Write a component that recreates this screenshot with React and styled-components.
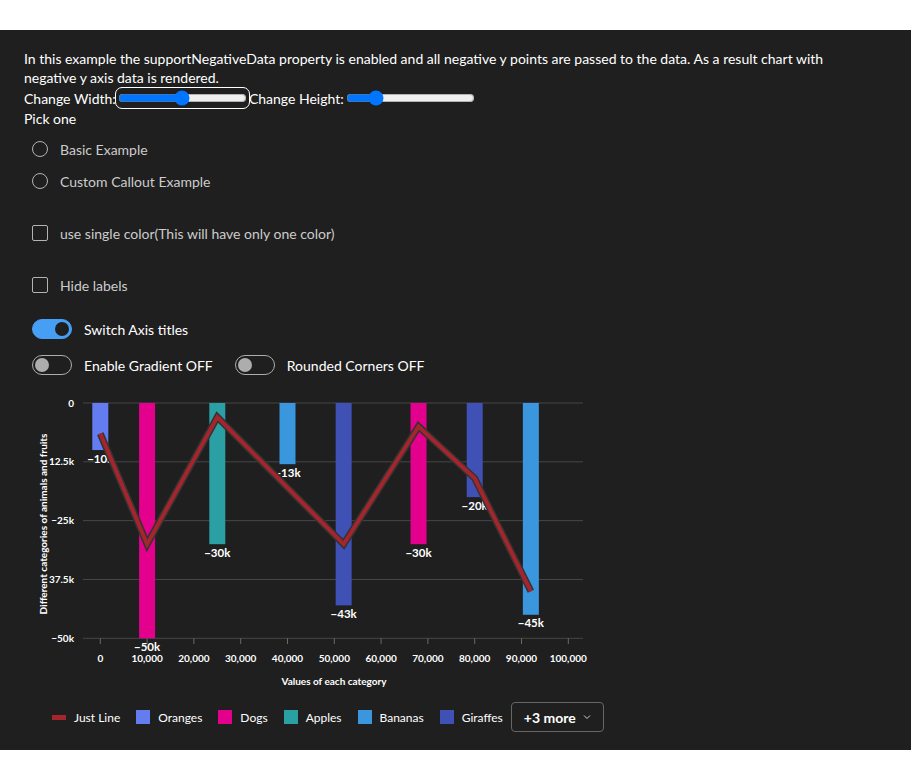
import React from 'react';
import styled, { createGlobalStyle } from 'styled-components';

const GlobalStyle = createGlobalStyle`
  body {
    margin: 0;
    background: #ffffff;
  }
`;

const Page = styled.div`
  margin-top: 30px;
  background: #1f1f1f;
  color: #ffffff;
  font-family: Lato, 'Noto Sans', sans-serif;
  font-size: 14px;
  padding: 19px 24px 18px;
`;

const Description = styled.div`
  line-height: 19px;
  max-width: 840px;
`;

const SliderRow = styled.div`
  display: flex;
  align-items: center;
  height: 22px;
`;

const Range = styled.input`
  margin: 0 2px;
  width: 129px;
  border-radius: 4px;
  outline: ${p => (p.$focused ? '1px solid #ffffff' : 'none')};
  outline-offset: 2px;
`;

const PickLabel = styled.div`
  line-height: 20px;
  margin-bottom: 4px;
`;

const OptionRow = styled.label`
  display: flex;
  align-items: center;
  gap: 12px;
  height: 32px;
  padding-left: 8px;
  color: #cccccc;
  margin-top: ${p => p.$gap || 0}px;
`;

const RadioCircle = styled.span`
  width: 16px;
  height: 16px;
  box-sizing: border-box;
  border: 1px solid #b3b3b3;
  border-radius: 50%;
`;

const CheckBox = styled.span`
  width: 16px;
  height: 16px;
  box-sizing: border-box;
  border: 1px solid #b3b3b3;
  border-radius: 2px;
`;

const ToggleRow = styled.div`
  display: flex;
  align-items: center;
  gap: 22px;
  margin-top: ${p => p.$gap}px;
  padding-left: 8px;
`;

const ToggleItem = styled.label`
  display: flex;
  align-items: center;
  gap: 12px;
  height: 20px;
`;

const Track = styled.span`
  width: 40px;
  height: 20px;
  box-sizing: border-box;
  border-radius: 10px;
  display: flex;
  align-items: center;
  padding: 0 2px;
  justify-content: ${p => (p.$on ? 'flex-end' : 'flex-start')};
  background: ${p => (p.$on ? '#479ef5' : 'transparent')};
  border: 1px solid ${p => (p.$on ? '#479ef5' : '#adadad')};
`;

const Knob = styled.span`
  width: 14px;
  height: 14px;
  border-radius: 50%;
  background: ${p => (p.$on ? '#1f1f1f' : '#adadad')};
`;

const ChartSvg = styled.svg`
  display: block;
  margin-top: 8px;
  font-family: Lato, 'Noto Sans', sans-serif;
`;

const Legend = styled.div`
  display: flex;
  align-items: center;
  margin-top: 7px;
  padding-left: 20px;
  height: 30px;
`;

const LegendItem = styled.div`
  display: flex;
  align-items: center;
  gap: 8px;
  padding: 0 8px;
  font-size: 12px;
  color: #ffffff;
`;

const Swatch = styled.span`
  width: 14px;
  height: ${p => (p.$line ? 5 : 14)}px;
  background: ${p => p.$color};
`;

const MoreButton = styled.button`
  display: flex;
  align-items: center;
  gap: 6px;
  height: 30px;
  margin-left: 0;
  padding: 0 11px 0 12px;
  background: transparent;
  border: 1px solid #666666;
  border-radius: 4px;
  color: #ffffff;
  font-family: Lato, 'Noto Sans', sans-serif;
  font-size: 14px;
  font-weight: 700;
`;

const bars = [
  { x: 0, y: -10000, c: '#637cef', label: '−10k' },
  { x: 10000, y: -50000, c: '#e3008c', label: '−50k' },
  { x: 25000, y: -30000, c: '#2aa0a4', label: '−30k' },
  { x: 40000, y: -13000, c: '#3a96dd', label: '−13k' },
  { x: 52000, y: -43000, c: '#3f51b5', label: '−43k' },
  { x: 68000, y: -30000, c: '#e3008c', label: '−30k' },
  { x: 80000, y: -20000, c: '#3f51b5', label: '−20k' },
  { x: 92000, y: -45000, c: '#3a96dd', label: '−45k' },
];

const linePoints = [
  [0, -6500], [10000, -30000], [25000, -3000], [52000, -30000],
  [68000, -5000], [80000, -16000], [92000, -40000],
];

const xPx = v => 76.3 + v * 0.00468;
const yPx = v => 20 + (-v / 50000) * 235.3;

const yTicks = [
  [0, '0'], [-12500, '−12.5k'], [-25000, '−25k'], [-37500, '−37.5k'], [-50000, '−50k'],
];
const xTicks = [0, 10000, 20000, 30000, 40000, 50000, 60000, 70000, 80000, 90000, 100000];

const legendItems = [
  { name: 'Just Line', color: '#a4262c', line: true },
  { name: 'Oranges', color: '#637cef' },
  { name: 'Dogs', color: '#e3008c' },
  { name: 'Apples', color: '#2aa0a4' },
  { name: 'Bananas', color: '#3a96dd' },
  { name: 'Giraffes', color: '#3f51b5' },
];

const Chart = () => {
  const pts = linePoints.map(([x, y]) => `${xPx(x)},${yPx(y)}`).join(' ');
  return (
    <ChartSvg width="590" height="312">
      {yTicks.map(([v]) => (
        <line key={v} x1="59" x2="559" y1={yPx(v)} y2={yPx(v)} stroke="#474747" strokeWidth="1" />
      ))}
      {xTicks.map(v => (
        <line key={v} x1={xPx(v)} x2={xPx(v)} y1="255.3" y2="261" stroke="#6a6a6a" strokeWidth="1" />
      ))}
      {yTicks.map(([v, t]) => (
        <text key={t} x="50" y={yPx(v) + 3.5} textAnchor="end" fill="#ffffff" fontSize="10" fontWeight="700">{t}</text>
      ))}
      {xTicks.map(v => (
        <text key={v} x={xPx(v)} y="278.5" textAnchor="middle" fill="#ffffff" fontSize="10" fontWeight="700">
          {v.toLocaleString('en-US')}
        </text>
      ))}
      <text
        x="19" y="141" transform="rotate(-90 19 141)" textAnchor="middle" dominantBaseline="central"
        fill="#ffffff" fontSize="10" fontWeight="700" stroke="#1f1f1f" strokeWidth="4" paintOrder="stroke"
      >
        Different categories of animals and fruits
      </text>
      <text x="310" y="302" textAnchor="middle" fill="#ffffff" fontSize="10" fontWeight="700">
        Values of each category
      </text>
      {bars.map((b, i) => (
        <rect key={i} x={xPx(b.x) - 8} y="20" width="16" height={yPx(b.y) - 20} fill={b.c} />
      ))}
      {bars.map((b, i) => (
        <text key={i} x={xPx(b.x)} y={yPx(b.y) + 12.5} textAnchor="middle" fill="#ffffff" fontSize="11.5" fontWeight="700">
          {b.label}
        </text>
      ))}
      <polyline points={pts} fill="none" stroke="#333333" strokeWidth="7" strokeLinejoin="miter" />
      <polyline points={pts} fill="none" stroke="#a4262c" strokeWidth="4" strokeLinejoin="miter" />
    </ChartSvg>
  );
};

const Toggle = ({ on, label }) => (
  <ToggleItem>
    <Track $on={on}><Knob $on={on} /></Track>
    {label}
  </ToggleItem>
);

export default function App() {
  return (
    <>
      <GlobalStyle />
      <Page>
        <Description>
          In this example the supportNegativeData property is enabled and all negative y points are passed to the data. As a result chart with negative y axis data is rendered.
        </Description>
        <SliderRow>
          Change Width:
          <Range type="range" min="0" max="100" defaultValue="50" $focused />
          Change Height:
          <Range type="range" min="0" max="100" defaultValue="20" />
        </SliderRow>
        <PickLabel>Pick one</PickLabel>
        <OptionRow><RadioCircle />Basic Example</OptionRow>
        <OptionRow><RadioCircle />Custom Callout Example</OptionRow>
        <OptionRow $gap={20}><CheckBox />use single color(This will have only one color)</OptionRow>
        <OptionRow $gap={20}><CheckBox />Hide labels</OptionRow>
        <ToggleRow $gap={18}>
          <Toggle on label="Switch Axis titles" />
        </ToggleRow>
        <ToggleRow $gap={16}>
          <Toggle label="Enable Gradient OFF" />
          <Toggle label="Rounded Corners OFF" />
        </ToggleRow>
        <Chart />
        <Legend>
          {legendItems.map(it => (
            <LegendItem key={it.name}>
              <Swatch $color={it.color} $line={it.line} />
              {it.name}
            </LegendItem>
          ))}
          <MoreButton>
            +3 more
            <svg width="10" height="10" viewBox="0 0 10 10">
              <path d="M2 3.5 L5 6.5 L8 3.5" fill="none" stroke="#d0d0d0" strokeWidth="1" />
            </svg>
          </MoreButton>
        </Legend>
      </Page>
    </>
  );
}
